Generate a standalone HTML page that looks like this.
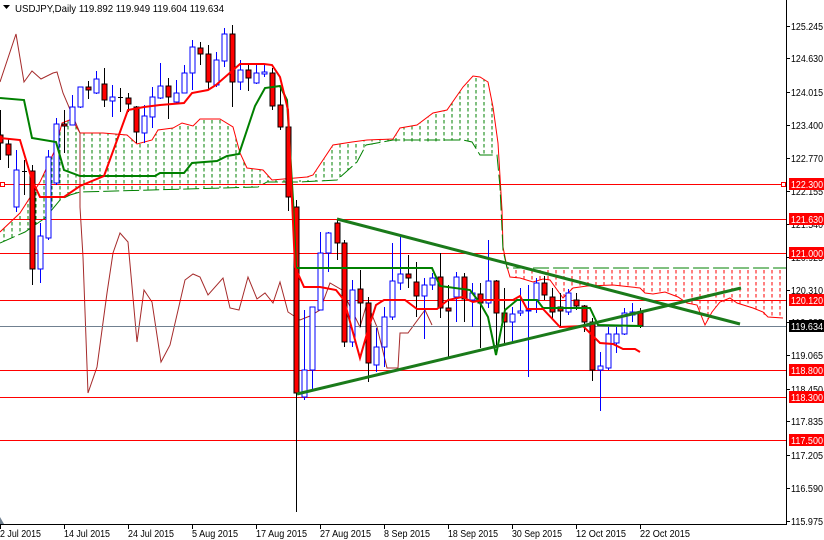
<!DOCTYPE html>
<html><head><meta charset="utf-8"><style>
html,body{margin:0;padding:0;background:#fff;width:824px;height:540px;overflow:hidden}
svg{display:block;font-family:"Liberation Sans",sans-serif}
</style></head><body>
<svg width="824" height="540" viewBox="0 0 824 540" xmlns="http://www.w3.org/2000/svg">
<defs>
<pattern id="pg" width="8" height="6" patternUnits="userSpaceOnUse"><line x1="4" y1="0" x2="4" y2="3.5" stroke="#008000" stroke-width="1"/></pattern>
<pattern id="pr" width="8" height="6" patternUnits="userSpaceOnUse"><line x1="4" y1="0" x2="4" y2="3.5" stroke="#ff0000" stroke-width="1"/></pattern>
</defs>
<rect width="824" height="540" fill="#fff"/>
<polygon fill="url(#pg)" points="0,232 20,213 40,182 55,150 62,123 72,119 80,133 103,133 127,135 137,144 152,140 158,130 173,128 182,123 193,126 200,119 220,119 233,127 240,153 247,168 263,170 272,180 307,177 313,175 333,145 352,142 367,140 393,139 400,128 417,125 433,113 447,110 463,87 473,76 480,77 488,82 493,107 498,143 502,210 503,247 503,250 500,187 497,155 480,155 472,142 463,140 366,145 357,162 337,180 300,182 267,182 258,187 80,192 70,195 60,200 45,218 25,232 0,243"/>
<polygon fill="url(#pr)" points="507,268 786,268 783,318 768,317 753,308 737,303 720,302 712,312 705,325 697,305 687,303 678,297 665,292 653,294 645,293 640,288 613,285 587,286 573,288 563,298 550,280 533,282 520,278 510,277"/>
<polyline fill="none" stroke="#ff0000" stroke-width="1" points="0,232 20,213 40,182 55,150 62,123 72,119 80,133 103,133 127,135 137,144 152,140 158,130 173,128 182,123 193,126 200,119 220,119 233,127 240,153 247,168 263,170 272,180 307,177 313,175 333,145 352,142 367,140 393,139 400,128 417,125 433,113 447,110 463,87 473,76 480,77 488,82 493,107 498,143 502,210 503,247 507,267 510,277 520,278 533,282 543,279 550,280 563,298 573,288 587,286 613,285 640,288 645,293 653,294 665,292 678,297 687,303 697,305 705,325 712,312 720,302 730,298 737,303 753,308 763,312 768,317 783,318"/>
<polyline fill="none" stroke="#008000" stroke-width="1" stroke-dasharray="16,4" points="0,243 25,232 45,218 60,200 70,195 80,192 258,187 267,182 300,182 337,180 357,162 366,145 393,140 463,140 472,142 480,155 497,155 500,187 503,250 507,268 786,268"/>
<polyline fill="none" stroke="#a52a2a" stroke-width="1" points="0,82 16,34 24,82 32,71 41,79 53,73 57,72 63,93 80,133 80,207 83,257 88,393 97,367 107,293 113,253 120,233 128,242 137,342 144,290 152,302 161,362 170,345 185,280 193,274 200,277 208,295 223,278 230,308 239,310 248,277 257,299 265,293 273,303 280,282 288,312 300,320 310,316 320,310 330,283 342,290 360,327 367,303 377,327 387,368 398,368 400,333 408,333 425,310 432,325"/>
<g stroke="#ff0000" stroke-width="1">
<line x1="0" y1="184.5" x2="786" y2="184.5"/><line x1="0" y1="219.5" x2="786" y2="219.5"/><line x1="0" y1="253.5" x2="786" y2="253.5"/><line x1="0" y1="300.5" x2="786" y2="300.5"/><line x1="0" y1="370.5" x2="786" y2="370.5"/><line x1="0" y1="397.5" x2="786" y2="397.5"/><line x1="0" y1="440.5" x2="786" y2="440.5"/>
</g>
<rect x="0.5" y="182.5" width="4" height="4" fill="#fff" stroke="#ff0000"/>
<rect x="781.5" y="182.5" width="4" height="4" fill="#fff" stroke="#ff0000"/>
<line x1="0" y1="326.5" x2="786" y2="326.5" stroke="#708090"/>
<g stroke-width="1">
<g stroke="#000"><line x1="0.5" y1="110" x2="0.5" y2="160"/><rect x="-2" y="135" width="5" height="8" fill="#ff0000"/></g>
<g stroke="#000"><line x1="8.5" y1="138" x2="8.5" y2="168"/><rect x="6" y="144" width="5" height="11" fill="#ff0000"/></g>
<g stroke="#0000ff"><line x1="16.5" y1="150" x2="16.5" y2="212"/><rect x="14" y="170" width="5" height="37" fill="#fff"/></g>
<g stroke="#000"><line x1="24.5" y1="160" x2="24.5" y2="195"/><line x1="22" y1="171.5" x2="27" y2="171.5"/></g>
<g stroke="#000"><line x1="32.5" y1="165" x2="32.5" y2="285"/><rect x="30" y="171" width="5" height="98" fill="#ff0000"/></g>
<g stroke="#0000ff"><line x1="40.5" y1="223" x2="40.5" y2="283"/><rect x="38" y="236" width="5" height="33" fill="#fff"/></g>
<g stroke="#0000ff"><line x1="48.5" y1="150" x2="48.5" y2="240"/><rect x="46" y="157" width="5" height="81" fill="#fff"/></g>
<g stroke="#0000ff"><line x1="56.5" y1="118" x2="56.5" y2="185"/><rect x="54" y="124" width="5" height="59" fill="#fff"/></g>
<g stroke="#000"><line x1="64.5" y1="110" x2="64.5" y2="153"/><rect x="62" y="124" width="5" height="2" fill="#ff0000"/></g>
<g stroke="#0000ff"><line x1="72.5" y1="95" x2="72.5" y2="125"/><rect x="70" y="107" width="5" height="18" fill="#fff"/></g>
<g stroke="#0000ff"><line x1="80.5" y1="87" x2="80.5" y2="108"/><rect x="78" y="87" width="5" height="20" fill="#fff"/></g>
<g stroke="#000"><line x1="88.5" y1="81" x2="88.5" y2="99"/><rect x="86" y="87" width="5" height="3" fill="#ff0000"/></g>
<g stroke="#0000ff"><line x1="96.5" y1="71" x2="96.5" y2="94"/><rect x="94" y="79" width="5" height="14" fill="#fff"/></g>
<g stroke="#000"><line x1="104.5" y1="68" x2="104.5" y2="107"/><rect x="102" y="84" width="5" height="16" fill="#ff0000"/></g>
<g stroke="#0000ff"><line x1="112.5" y1="85" x2="112.5" y2="117"/><rect x="110" y="97" width="5" height="4" fill="#fff"/></g>
<g stroke="#000"><line x1="120.5" y1="88" x2="120.5" y2="112"/><line x1="118" y1="97.5" x2="123" y2="97.5"/></g>
<g stroke="#000"><line x1="128.5" y1="93" x2="128.5" y2="112"/><rect x="126" y="98" width="5" height="6" fill="#ff0000"/></g>
<g stroke="#000"><line x1="136.5" y1="106" x2="136.5" y2="143"/><rect x="134" y="107" width="5" height="25" fill="#ff0000"/></g>
<g stroke="#0000ff"><line x1="144.5" y1="105" x2="144.5" y2="143"/><rect x="142" y="116" width="5" height="17" fill="#fff"/></g>
<g stroke="#0000ff"><line x1="152.5" y1="87" x2="152.5" y2="128"/><rect x="150" y="97" width="5" height="20" fill="#fff"/></g>
<g stroke="#0000ff"><line x1="160.5" y1="63" x2="160.5" y2="99"/><rect x="158" y="86" width="5" height="12" fill="#fff"/></g>
<g stroke="#000"><line x1="168.5" y1="78" x2="168.5" y2="119"/><rect x="166" y="86" width="5" height="11" fill="#ff0000"/></g>
<g stroke="#0000ff"><line x1="176.5" y1="80" x2="176.5" y2="103"/><rect x="174" y="93" width="5" height="9" fill="#fff"/></g>
<g stroke="#0000ff"><line x1="184.5" y1="65" x2="184.5" y2="93"/><rect x="182" y="73" width="5" height="20" fill="#fff"/></g>
<g stroke="#0000ff"><line x1="192.5" y1="40" x2="192.5" y2="90"/><rect x="190" y="47" width="5" height="26" fill="#fff"/></g>
<g stroke="#000"><line x1="200.5" y1="42" x2="200.5" y2="65"/><rect x="198" y="48" width="5" height="6" fill="#ff0000"/></g>
<g stroke="#000"><line x1="208.5" y1="45" x2="208.5" y2="90"/><rect x="206" y="54" width="5" height="28" fill="#ff0000"/></g>
<g stroke="#0000ff"><line x1="216.5" y1="52" x2="216.5" y2="87"/><rect x="214" y="60" width="5" height="25" fill="#fff"/></g>
<g stroke="#0000ff"><line x1="224.5" y1="28" x2="224.5" y2="67"/><rect x="222" y="34" width="5" height="27" fill="#fff"/></g>
<g stroke="#000"><line x1="232.5" y1="25" x2="232.5" y2="107"/><rect x="230" y="34" width="5" height="48" fill="#ff0000"/></g>
<g stroke="#0000ff"><line x1="240.5" y1="60" x2="240.5" y2="90"/><rect x="238" y="70" width="5" height="12" fill="#fff"/></g>
<g stroke="#000"><line x1="248.5" y1="65" x2="248.5" y2="91"/><rect x="246" y="70" width="5" height="8" fill="#ff0000"/></g>
<g stroke="#0000ff"><line x1="256.5" y1="63" x2="256.5" y2="84"/><rect x="254" y="73" width="5" height="10" fill="#fff"/></g>
<g stroke="#0000ff"><line x1="264.5" y1="65" x2="264.5" y2="77"/><rect x="262" y="72" width="5" height="2" fill="#fff"/></g>
<g stroke="#000"><line x1="272.5" y1="68" x2="272.5" y2="110"/><rect x="270" y="73" width="5" height="33" fill="#ff0000"/></g>
<g stroke="#000"><line x1="280.5" y1="87" x2="280.5" y2="130"/><rect x="278" y="105" width="5" height="22" fill="#ff0000"/></g>
<g stroke="#000"><line x1="288.5" y1="120" x2="288.5" y2="211"/><rect x="286" y="127" width="5" height="70" fill="#ff0000"/></g>
<g stroke="#000"><line x1="296.5" y1="200" x2="296.5" y2="512"/><rect x="294" y="207" width="5" height="186" fill="#ff0000"/></g>
<g stroke="#0000ff"><line x1="304.5" y1="310" x2="304.5" y2="400"/><rect x="302" y="370" width="5" height="27" fill="#fff"/></g>
<g stroke="#0000ff"><line x1="312.5" y1="307" x2="312.5" y2="390"/><rect x="310" y="307" width="5" height="63" fill="#fff"/></g>
<g stroke="#0000ff"><line x1="320.5" y1="232" x2="320.5" y2="310"/><rect x="318" y="253" width="5" height="57" fill="#fff"/></g>
<g stroke="#0000ff"><line x1="328.5" y1="232" x2="328.5" y2="272"/><rect x="326" y="233" width="5" height="20" fill="#fff"/></g>
<g stroke="#000"><line x1="337.5" y1="220" x2="337.5" y2="260"/><rect x="335" y="223" width="5" height="20" fill="#ff0000"/></g>
<g stroke="#000"><line x1="344.5" y1="240" x2="344.5" y2="347"/><rect x="342" y="243" width="5" height="99" fill="#ff0000"/></g>
<g stroke="#0000ff"><line x1="352.5" y1="280" x2="352.5" y2="347"/><rect x="350" y="290" width="5" height="52" fill="#fff"/></g>
<g stroke="#000"><line x1="360.5" y1="270" x2="360.5" y2="327"/><rect x="358" y="289" width="5" height="14" fill="#ff0000"/></g>
<g stroke="#000"><line x1="368.5" y1="297" x2="368.5" y2="382"/><rect x="366" y="303" width="5" height="60" fill="#ff0000"/></g>
<g stroke="#0000ff"><line x1="376.5" y1="328" x2="376.5" y2="372"/><rect x="374" y="347" width="5" height="18" fill="#fff"/></g>
<g stroke="#0000ff"><line x1="384.5" y1="307" x2="384.5" y2="367"/><rect x="382" y="317" width="5" height="30" fill="#fff"/></g>
<g stroke="#0000ff"><line x1="392.5" y1="243" x2="392.5" y2="320"/><rect x="390" y="281" width="5" height="36" fill="#fff"/></g>
<g stroke="#0000ff"><line x1="400.5" y1="237" x2="400.5" y2="290"/><rect x="398" y="274" width="5" height="9" fill="#fff"/></g>
<g stroke="#000"><line x1="408.5" y1="255" x2="408.5" y2="288"/><rect x="406" y="274" width="5" height="4" fill="#ff0000"/></g>
<g stroke="#000"><line x1="416.5" y1="262" x2="416.5" y2="317"/><rect x="414" y="282" width="5" height="14" fill="#ff0000"/></g>
<g stroke="#0000ff"><line x1="424.5" y1="278" x2="424.5" y2="339"/><rect x="422" y="285" width="5" height="11" fill="#fff"/></g>
<g stroke="#0000ff"><line x1="432.5" y1="273" x2="432.5" y2="290"/><rect x="430" y="278" width="5" height="7" fill="#fff"/></g>
<g stroke="#000"><line x1="440.5" y1="253" x2="440.5" y2="318"/><rect x="438" y="277" width="5" height="31" fill="#ff0000"/></g>
<g stroke="#000"><line x1="448.5" y1="285" x2="448.5" y2="358"/><rect x="446" y="308" width="5" height="3" fill="#ff0000"/></g>
<g stroke="#0000ff"><line x1="456.5" y1="272" x2="456.5" y2="322"/><rect x="454" y="277" width="5" height="20" fill="#fff"/></g>
<g stroke="#000"><line x1="464.5" y1="273" x2="464.5" y2="322"/><rect x="462" y="277" width="5" height="22" fill="#ff0000"/></g>
<g stroke="#0000ff"><line x1="472.5" y1="283" x2="472.5" y2="327"/><rect x="470" y="293" width="5" height="7" fill="#fff"/></g>
<g stroke="#000"><line x1="480.5" y1="283" x2="480.5" y2="348"/><rect x="478" y="294" width="5" height="9" fill="#ff0000"/></g>
<g stroke="#0000ff"><line x1="488.5" y1="240" x2="488.5" y2="308"/><rect x="486" y="281" width="5" height="22" fill="#fff"/></g>
<g stroke="#000"><line x1="496.5" y1="280" x2="496.5" y2="347"/><rect x="494" y="281" width="5" height="32" fill="#ff0000"/></g>
<g stroke="#000"><line x1="504.5" y1="288" x2="504.5" y2="345"/><rect x="502" y="313" width="5" height="9" fill="#ff0000"/></g>
<g stroke="#0000ff"><line x1="512.5" y1="307" x2="512.5" y2="343"/><rect x="510" y="314" width="5" height="8" fill="#fff"/></g>
<g stroke="#0000ff"><line x1="520.5" y1="288" x2="520.5" y2="316"/><rect x="518" y="311" width="5" height="2" fill="#fff"/></g>
<g stroke="#0000ff"><line x1="528.5" y1="285" x2="528.5" y2="377"/><rect x="526" y="310" width="5" height="1" fill="#fff"/></g>
<g stroke="#0000ff"><line x1="536.5" y1="278" x2="536.5" y2="313"/><rect x="534" y="283" width="5" height="17" fill="#fff"/></g>
<g stroke="#000"><line x1="544.5" y1="276" x2="544.5" y2="300"/><rect x="542" y="283" width="5" height="12" fill="#ff0000"/></g>
<g stroke="#000"><line x1="552.5" y1="288" x2="552.5" y2="320"/><rect x="550" y="297" width="5" height="15" fill="#ff0000"/></g>
<g stroke="#000"><line x1="560.5" y1="293" x2="560.5" y2="327"/><rect x="558" y="307" width="5" height="4" fill="#ff0000"/></g>
<g stroke="#0000ff"><line x1="568.5" y1="289" x2="568.5" y2="315"/><rect x="566" y="293" width="5" height="19" fill="#fff"/></g>
<g stroke="#000"><line x1="576.5" y1="293" x2="576.5" y2="310"/><rect x="574" y="300" width="5" height="6" fill="#ff0000"/></g>
<g stroke="#000"><line x1="584.5" y1="305" x2="584.5" y2="332"/><rect x="582" y="306" width="5" height="16" fill="#ff0000"/></g>
<g stroke="#000"><line x1="592.5" y1="318" x2="592.5" y2="381"/><rect x="590" y="322" width="5" height="48" fill="#ff0000"/></g>
<g stroke="#0000ff"><line x1="600.5" y1="352" x2="600.5" y2="411"/><rect x="598" y="366" width="5" height="4" fill="#fff"/></g>
<g stroke="#0000ff"><line x1="608.5" y1="327" x2="608.5" y2="370"/><rect x="606" y="334" width="5" height="34" fill="#fff"/></g>
<g stroke="#0000ff"><line x1="616.5" y1="327" x2="616.5" y2="353"/><rect x="614" y="334" width="5" height="9" fill="#fff"/></g>
<g stroke="#0000ff"><line x1="624.5" y1="308" x2="624.5" y2="335"/><rect x="622" y="313" width="5" height="21" fill="#fff"/></g>
<g stroke="#0000ff"><line x1="632.5" y1="303" x2="632.5" y2="322"/><rect x="630" y="312" width="5" height="3" fill="#fff"/></g>
<g stroke="#000"><line x1="640.5" y1="308" x2="640.5" y2="328"/><rect x="638" y="313" width="5" height="13" fill="#ff0000"/></g>
</g>
<polyline fill="none" stroke="#008000" stroke-width="2" points="0,98 24,100 32,138 56,142 64,170 80,176 155,176 160,173 184,173 192,163 217,161 227,156 239,154 255,106 265,88 280,86 287,100 293,200 296,268 432,268 440,286 470,290 480,303 488,317 496,355 505,310 517,300 537,300 543,308 590,308 598,325 642,326"/>
<polyline fill="none" stroke="#ff0000" stroke-width="2" points="0,138 20,140 32,180 40,197 64,197 80,186 104,176 128,110 144,107 160,105 184,103 192,93 208,90 216,85 240,64 264,64 272,65 280,77 288,110 295,267 304,287 320,287 336,290 344,300 360,358 368,330 376,305 384,300 405,300 417,309 437,309 448,300 462,297 473,302 483,300 513,300 520,296 527,309 543,309 560,327 583,326 600,343 613,344 623,349 635,349 640,352"/>
<line x1="337" y1="219" x2="740" y2="324" stroke="#1a7a1a" stroke-width="3"/>
<line x1="297" y1="394" x2="741" y2="288" stroke="#1a7a1a" stroke-width="3"/>
<line x1="786.5" y1="0" x2="786.5" y2="525" stroke="#000"/>
<line x1="0" y1="524.5" x2="787" y2="524.5" stroke="#000"/>
<g font-size="10" fill="#000">
<g stroke="#000"><line x1="786" y1="26.5" x2="790" y2="26.5"/><line x1="786" y1="58.5" x2="790" y2="58.5"/><line x1="786" y1="92.5" x2="790" y2="92.5"/><line x1="786" y1="125.5" x2="790" y2="125.5"/><line x1="786" y1="158.5" x2="790" y2="158.5"/><line x1="786" y1="191.5" x2="790" y2="191.5"/><line x1="786" y1="224.5" x2="790" y2="224.5"/><line x1="786" y1="257.5" x2="790" y2="257.5"/><line x1="786" y1="290.5" x2="790" y2="290.5"/><line x1="786" y1="322.5" x2="790" y2="322.5"/><line x1="786" y1="355.5" x2="790" y2="355.5"/><line x1="786" y1="389.5" x2="790" y2="389.5"/><line x1="786" y1="421.5" x2="790" y2="421.5"/><line x1="786" y1="455.5" x2="790" y2="455.5"/><line x1="786" y1="488.5" x2="790" y2="488.5"/><line x1="786" y1="521.5" x2="790" y2="521.5"/></g>
<g textLength="32" lengthAdjust="spacingAndGlyphs">
<text x="791" y="30" textLength="32" lengthAdjust="spacingAndGlyphs">125.245</text><text x="791" y="62" textLength="32" lengthAdjust="spacingAndGlyphs">124.630</text><text x="791" y="96" textLength="32" lengthAdjust="spacingAndGlyphs">124.015</text><text x="791" y="129" textLength="32" lengthAdjust="spacingAndGlyphs">123.400</text><text x="791" y="162" textLength="32" lengthAdjust="spacingAndGlyphs">122.770</text><text x="791" y="195" textLength="32" lengthAdjust="spacingAndGlyphs">122.155</text><text x="791" y="228" textLength="32" lengthAdjust="spacingAndGlyphs">121.540</text><text x="791" y="261" textLength="32" lengthAdjust="spacingAndGlyphs">120.925</text><text x="791" y="294" textLength="32" lengthAdjust="spacingAndGlyphs">120.310</text><text x="791" y="326" textLength="32" lengthAdjust="spacingAndGlyphs">119.695</text><text x="791" y="359" textLength="32" lengthAdjust="spacingAndGlyphs">119.065</text><text x="791" y="393" textLength="32" lengthAdjust="spacingAndGlyphs">118.450</text><text x="791" y="425" textLength="32" lengthAdjust="spacingAndGlyphs">117.835</text><text x="791" y="459" textLength="32" lengthAdjust="spacingAndGlyphs">117.205</text><text x="791" y="492" textLength="32" lengthAdjust="spacingAndGlyphs">116.590</text><text x="791" y="525" textLength="32" lengthAdjust="spacingAndGlyphs">115.975</text>
</g></g>
<g font-size="10" fill="#fff">
<rect x="789" y="178" width="35" height="12" fill="#ff0000"/><text x="791" y="188" textLength="32" lengthAdjust="spacingAndGlyphs">122.300</text>
<rect x="789" y="213" width="35" height="12" fill="#ff0000"/><text x="791" y="223" textLength="32" lengthAdjust="spacingAndGlyphs">121.630</text>
<rect x="789" y="247" width="35" height="12" fill="#ff0000"/><text x="791" y="257" textLength="32" lengthAdjust="spacingAndGlyphs">121.000</text>
<rect x="789" y="294" width="35" height="12" fill="#ff0000"/><text x="791" y="304" textLength="32" lengthAdjust="spacingAndGlyphs">120.120</text>
<rect x="789" y="320" width="35" height="12" fill="#000"/><text x="791" y="330" textLength="32" lengthAdjust="spacingAndGlyphs">119.634</text>
<rect x="789" y="364" width="35" height="12" fill="#ff0000"/><text x="791" y="374" textLength="32" lengthAdjust="spacingAndGlyphs">118.800</text>
<rect x="789" y="391" width="35" height="12" fill="#ff0000"/><text x="791" y="401" textLength="32" lengthAdjust="spacingAndGlyphs">118.300</text>
<rect x="789" y="434" width="35" height="12" fill="#ff0000"/><text x="791" y="444" textLength="32" lengthAdjust="spacingAndGlyphs">117.500</text>
</g>
<g stroke="#000"><line x1="0.5" y1="524" x2="0.5" y2="529"/><line x1="64.5" y1="524" x2="64.5" y2="529"/><line x1="128.5" y1="524" x2="128.5" y2="529"/><line x1="192.5" y1="524" x2="192.5" y2="529"/><line x1="256.5" y1="524" x2="256.5" y2="529"/><line x1="320.5" y1="524" x2="320.5" y2="529"/><line x1="384.5" y1="524" x2="384.5" y2="529"/><line x1="448.5" y1="524" x2="448.5" y2="529"/><line x1="512.5" y1="524" x2="512.5" y2="529"/><line x1="576.5" y1="524" x2="576.5" y2="529"/><line x1="640.5" y1="524" x2="640.5" y2="529"/></g>
<polygon points="0,517 4,524 0,524" fill="#708090"/>
<g font-size="10" fill="#000">
<text x="0" y="537" textLength="41" lengthAdjust="spacingAndGlyphs">2 Jul 2015</text><text x="64" y="537" textLength="46" lengthAdjust="spacingAndGlyphs">14 Jul 2015</text><text x="128" y="537" textLength="46" lengthAdjust="spacingAndGlyphs">24 Jul 2015</text><text x="192" y="537" textLength="46" lengthAdjust="spacingAndGlyphs">5 Aug 2015</text><text x="256" y="537" textLength="51" lengthAdjust="spacingAndGlyphs">17 Aug 2015</text><text x="320" y="537" textLength="51" lengthAdjust="spacingAndGlyphs">27 Aug 2015</text><text x="384" y="537" textLength="46" lengthAdjust="spacingAndGlyphs">8 Sep 2015</text><text x="448" y="537" textLength="50" lengthAdjust="spacingAndGlyphs">18 Sep 2015</text><text x="512" y="537" textLength="50" lengthAdjust="spacingAndGlyphs">30 Sep 2015</text><text x="576" y="537" textLength="50" lengthAdjust="spacingAndGlyphs">12 Oct 2015</text><text x="640" y="537" textLength="50" lengthAdjust="spacingAndGlyphs">22 Oct 2015</text>
</g>
<polygon points="3,5 10,5 6.5,9" fill="#000"/>
<text x="15" y="12" font-size="10.5" fill="#000" textLength="209" lengthAdjust="spacingAndGlyphs">USDJPY,Daily  119.892 119.949 119.604 119.634</text>
</svg>
</body></html>
